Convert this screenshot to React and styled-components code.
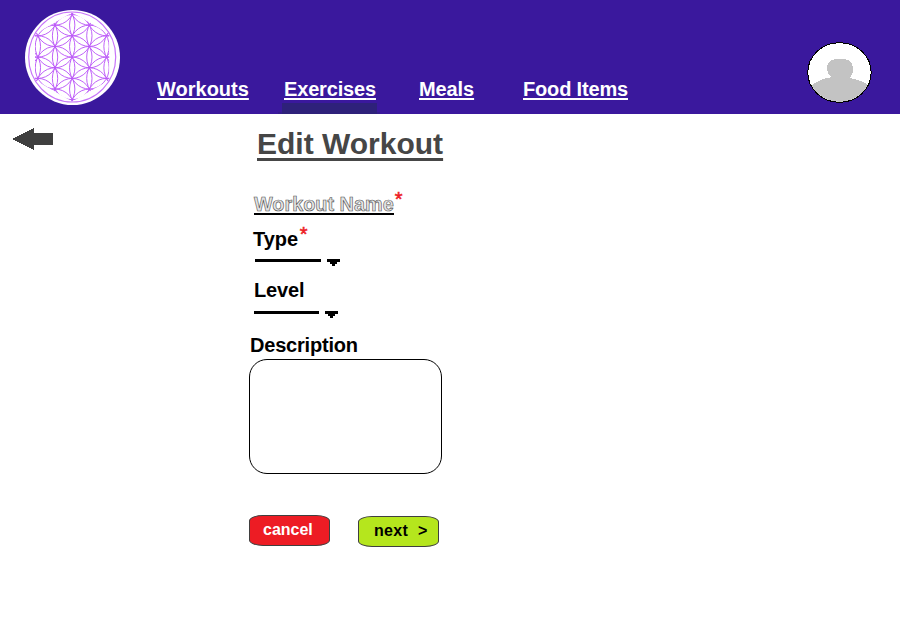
import React from "react";
import styled, { createGlobalStyle } from "styled-components";

const GlobalStyle = createGlobalStyle`
  * { box-sizing: border-box; }
  body {
    margin: 0;
    background: #fff;
    font-family: "Liberation Sans", Arial, sans-serif;
    font-weight: 700;
  }
`;

const Page = styled.div`
  width: 900px;
  height: 626px;
  overflow: hidden;
  background: #fff;
`;

const Header = styled.header`
  display: flex;
  align-items: flex-start;
  height: 114px;
  padding: 10px 28px 0 25px;
  background: #3a189d;
`;

const Logo = styled.svg`
  flex: none;
  width: 95px;
  height: 95px;
`;

const Nav = styled.nav`
  display: flex;
  flex: 1;
  align-items: flex-start;
  padding: 68px 0 0 37px;
`;

const NavItem = styled.div`
  display: flex;
  flex-direction: column;
  flex: none;
  align-items: flex-start;
  width: ${(p) => p.$width}px;
`;

const NavLink = styled.span`
  color: #fff;
  font-size: 20px;
  line-height: 22px;
  letter-spacing: ${(p) => p.$tracking || 0}px;
  white-space: nowrap;
  text-decoration: underline 2px;
  text-underline-offset: 2px;
  text-decoration-skip-ink: none;
`;

const ActiveMark = styled.svg`
  width: 102px;
  height: 11px;
  margin: 3px -5px 0 -6px;
`;

const Avatar = styled.svg`
  flex: none;
  width: 65px;
  height: 61px;
  margin-top: 32px;
`;

const Main = styled.main`
  display: flex;
  align-items: flex-start;
`;

const BackButton = styled.button`
  flex: none;
  width: 41px;
  height: 24px;
  margin: 13px 196px 0 12px;
  padding: 0;
  border: 0;
  background: none;
`;

const Form = styled.form`
  display: flex;
  flex-direction: column;
  align-items: flex-start;
  width: 240px;
`;

const Title = styled.h1`
  margin: 13px 0 0 8px;
  color: #464646;
  font-size: 30px;
  line-height: 33px;
  white-space: nowrap;
  text-decoration: underline 3px;
  text-underline-offset: 4px;
  text-decoration-skip-ink: none;
`;

const FieldRow = styled.div`
  display: flex;
  align-items: flex-start;
  height: 22px;
  margin: ${(p) => p.$top}px 0 0 ${(p) => p.$left}px;
`;

const Label = styled.label`
  color: #000;
  font-size: 20px;
  line-height: 22px;
  letter-spacing: ${(p) => p.$tracking || 0}px;
  white-space: nowrap;
`;

const NameField = styled(Label)`
  height: 22px;
  border-bottom: 2px solid #000;
  color: #e4e4e4;
  font-size: 19.85px;
  -webkit-text-stroke: 0.6px #505050;
`;

const Required = styled.span`
  width: 9px;
  margin: -5px 0 0 ${(p) => p.$gap || 0}px;
  color: #ed1c24;
  font-size: 20px;
  font-weight: 400;
  line-height: 22px;
  -webkit-text-stroke: 0.5px #ed1c24;
`;

const Select = styled.div`
  display: flex;
  align-items: flex-start;
  gap: 6px;
  height: 7px;
  margin: ${(p) => p.$top}px 0 0 ${(p) => p.$left}px;
`;

const SelectLine = styled.div`
  width: ${(p) => p.$width}px;
  height: 3px;
  background: #000;
`;

const Caret = styled.svg`
  width: 13px;
  height: 7px;
`;

const Description = styled.textarea`
  display: block;
  width: 193px;
  height: 115px;
  margin: 3px 0 0;
  border: 1px solid #000;
  border-radius: 18px;
  outline: 0;
  resize: none;
  background: #fff;
`;

const Actions = styled.div`
  display: flex;
  align-items: flex-start;
  gap: 28px;
  margin-top: 41px;
`;

const Button = styled.button`
  display: flex;
  align-items: flex-start;
  width: 81px;
  height: 31px;
  margin: ${(p) => p.$drop || 0}px 0 0;
  padding: 5px 0 0 ${(p) => p.$inset}px;
  border: 1px solid #3f3f3f;
  border-radius: 14px / 6px;
  background: ${(p) => p.$bg};
  color: ${(p) => p.$color};
  font: 700 16px/18px "Liberation Sans", Arial, sans-serif;
  letter-spacing: ${(p) => p.$tracking || 0}px;
  text-align: left;
  white-space: pre;
`;

// Circle centres on a hexagonal lattice, without the six far corners.
const STEP = 21.3;
const petals = [];
for (let q = -3; q <= 3; q += 1) {
  for (let r = -3; r <= 3; r += 1) {
    const x = q * STEP * 0.866;
    const y = (r + q / 2) * STEP;
    if (Math.abs(q + r) <= 3 && Math.hypot(x, y) < STEP * 2.9) {
      petals.push({ x, y });
    }
  }
}

function FlowerLogo() {
  return (
    <Logo viewBox="0 0 95 95">
      <defs>
        <clipPath id="flower">
          <path d="M0 -44.5L40 -23V23L0 44.5L-40 23V-23Z" />
        </clipPath>
      </defs>
      <circle cx="47.5" cy="47.5" r="47.5" fill="#fff" />
      <g fill="none" stroke="#bd5cf8">
        <ellipse cx="47.2" cy="47" rx="43.5" ry="45" strokeWidth="1.2" strokeOpacity="0.85" />
        <g transform="translate(47.2 47.1) scale(.93 1)" clipPath="url(#flower)" strokeWidth="1">
          {petals.map((c) => (
            <circle key={`${c.x},${c.y}`} cx={c.x} cy={c.y} r={STEP} />
          ))}
        </g>
      </g>
    </Logo>
  );
}

function Dropdown({ top, left, width }) {
  return (
    <Select $top={top} $left={left}>
      <SelectLine $width={width} />
      <Caret viewBox="0 0 13 7" shapeRendering="crispEdges">
        <path d="M0 0H13V3H10V5H8V7H5V5H3V3H0Z" />
      </Caret>
    </Select>
  );
}

const links = [
  { text: "Workouts", width: 127 },
  { text: "Exercises", width: 135, tracking: -0.16, active: true },
  { text: "Meals", width: 104, tracking: -0.1 },
  { text: "Food Items", width: 110, tracking: -0.17 },
];

export default function App() {
  return (
    <Page>
      <GlobalStyle />
      <Header>
        <FlowerLogo />
        <Nav>
          {links.map((l) => (
            <NavItem key={l.text} $width={l.width}>
              <NavLink $tracking={l.tracking}>{l.text}</NavLink>
              {l.active && (
                <ActiveMark viewBox="0 0 102 11" shapeRendering="crispEdges">
                  <path fill="#341c8c" d="M0 9H102V11H0Z" />
                  <path fill="#2e217a" d="M4 0H99V11H4Z" />
                </ActiveMark>
              )}
            </NavItem>
          ))}
        </Nav>
        <Avatar viewBox="0 0 65 61" shapeRendering="crispEdges">
          <defs>
            <clipPath id="face">
              <ellipse cx="32.5" cy="30.5" rx="31.5" ry="29.5" />
            </clipPath>
          </defs>
          <ellipse cx="32.5" cy="30.5" rx="31.7" ry="29.8" fill="#fff" />
          <g clipPath="url(#face)" fill="#c3c3c3">
            <path d="M25 18Q32 15 41 18Q46 21 46 27Q46 33 43 35V36Q54 38 61 43L65 61H0L4 44Q12 37 25 35Q20 32 20 26Q20 20 25 18Z" />
          </g>
          <ellipse cx="32.5" cy="30.5" rx="31.7" ry="29.8" fill="none" stroke="#000" strokeWidth="1" />
        </Avatar>
      </Header>
      <Main>
        <BackButton type="button" aria-label="Back">
          <svg width="41" height="24" viewBox="0 0 41 24" shapeRendering="crispEdges">
            <path fill="#3f3f3f" d="M0.5 12L22 1V6H41V18H22V23Z" />
          </svg>
        </BackButton>
        <Form>
          <Title>Edit Workout</Title>
          <FieldRow $top={33} $left={5}>
            <NameField>Workout Name</NameField>
            <Required $gap={1}>*</Required>
          </FieldRow>
          <FieldRow $top={13} $left={4}>
            <Label>Type</Label>
            <Required $gap={1.5}>*</Required>
          </FieldRow>
          <Dropdown top={9} left={6} width={66} />
          <FieldRow $top={13} $left={5}>
            <Label $tracking={-0.15}>Level</Label>
          </FieldRow>
          <Dropdown top={10} left={5} width={65} />
          <FieldRow $top={16} $left={1}>
            <Label htmlFor="description" $tracking={-0.2}>Description</Label>
          </FieldRow>
          <Description id="description" />
          <Actions>
            <Button type="button" $bg="#ed1c24" $color="#fff" $inset={13}>
              cancel
            </Button>
            <Button type="button" $bg="#b5e61d" $color="#000" $inset={15} $drop={1} $tracking={0.35}>
              {"next  >"}
            </Button>
          </Actions>
        </Form>
      </Main>
    </Page>
  );
}
